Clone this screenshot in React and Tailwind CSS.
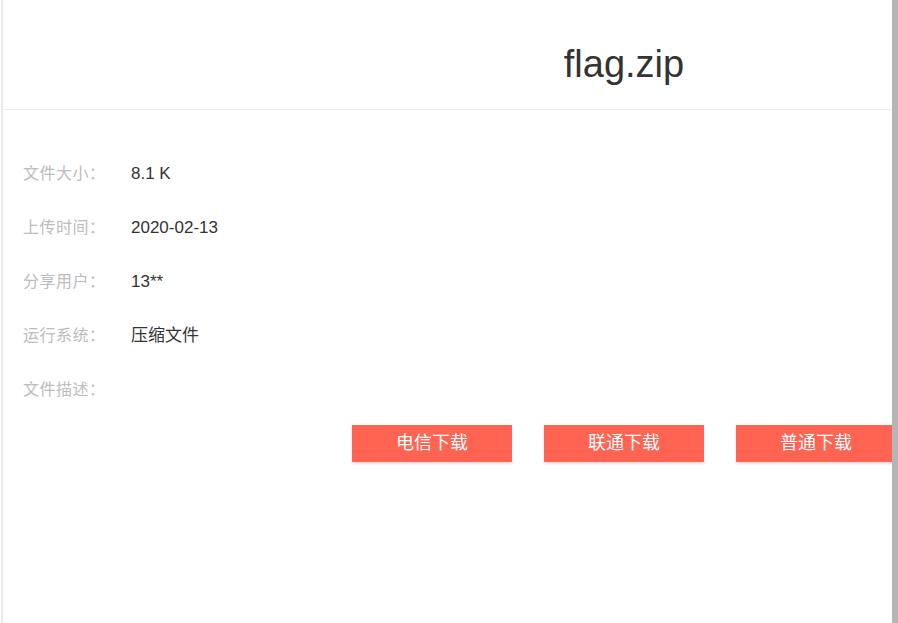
const ROWS = [
  ['文件大小：', '8.1 K'],
  ['上传时间：', '2020-02-13'],
  ['分享用户：', '13**'],
  ['运行系统：', '压缩文件'],
  ['文件描述：', ''],
]

const BUTTONS = ['电信下载', '联通下载', '普通下载']

export default function App() {
  return (
    <div
      className="flex w-[898px] h-[623px] overflow-hidden bg-white"
      style={{ fontFamily: '"Liberation Sans", Arial, "Noto Sans CJK SC", sans-serif' }}
    >
      <div className="flex-1 overflow-hidden pl-[1px]">
        <div className="w-[1244px] h-full border-l-2 border-[#ececec] bg-white">
          {/* Header */}
          <div className="h-[110px] border-b border-[#ececec] flex items-center justify-center pt-[18px]">
            <h1 className="text-[38px] leading-none text-[#333]">flag.zip</h1>
          </div>

          <div className="pt-[37px] pl-[20px]">
            {ROWS.map(([label, value]) => (
              <div key={label} className="flex items-center h-[54px]">
                <span className="w-[108px] text-[16px] text-[#bcbcbc] tracking-[0.5px]">{label}</span>
                <span className="text-[17px] text-[#333]">{value}</span>
              </div>
            ))}
          </div>

          <div className="flex justify-center gap-[32px] mt-[8px]">
            {BUTTONS.map((b) => (
              <button
                key={b}
                className="w-[160px] h-[37px] bg-[#ff6352] text-white text-[18px] shadow-[0_2px_2px_rgba(0,0,0,0.12)]"
              >
                {b}
              </button>
            ))}
          </div>
        </div>
      </div>
      <div className="w-[6px] h-full bg-[#b5b5b5]" />
    </div>
  )
}
